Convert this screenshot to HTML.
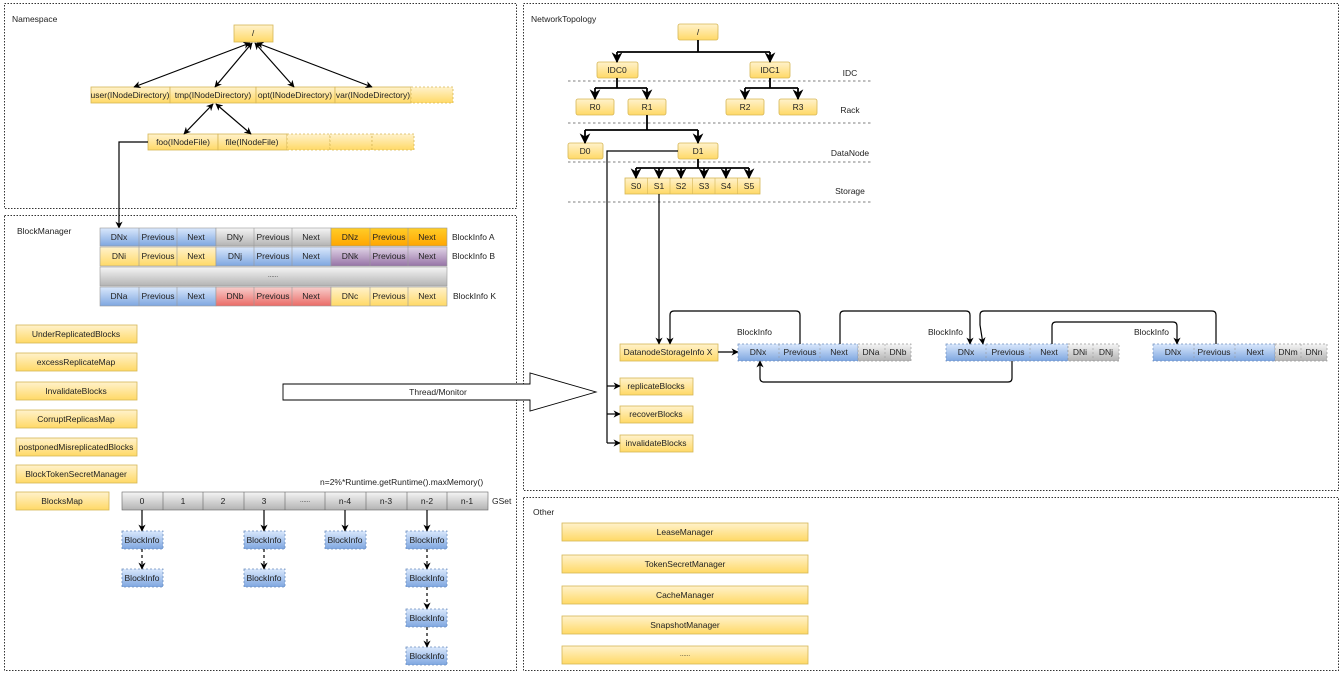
<!DOCTYPE html>
<html><head><meta charset="utf-8"><style>
html,body{margin:0;padding:0;background:#fff;width:1344px;height:673px;overflow:hidden}
svg{display:block;font-family:"Liberation Sans",sans-serif;font-size:8.5px}
text{fill:#222}
.c{text-anchor:middle;dominant-baseline:central}
.l{dominant-baseline:central}
.pan{fill:none;stroke:#333;stroke-dasharray:1.5 1.5;stroke-width:1}
.ln{fill:none;stroke:#000;stroke-width:1.2}
.lb{fill:none;stroke:#000;stroke-width:1.8}
.hd{stroke-dasharray:3 3}
</style></head><body>
<svg width="1344" height="673" viewBox="0 0 1344 673">
<defs>
<linearGradient id="y" x1="0" y1="0" x2="0" y2="1"><stop offset="0" stop-color="#fff2cc"/><stop offset="1" stop-color="#ffd966"/></linearGradient>
<linearGradient id="b" x1="0" y1="0" x2="0" y2="1"><stop offset="0" stop-color="#dae8fc"/><stop offset="1" stop-color="#7ea6e0"/></linearGradient>
<linearGradient id="g" x1="0" y1="0" x2="0" y2="1"><stop offset="0" stop-color="#f5f5f5"/><stop offset="1" stop-color="#b3b3b3"/></linearGradient>
<linearGradient id="o" x1="0" y1="0" x2="0" y2="1"><stop offset="0" stop-color="#ffcd28"/><stop offset="1" stop-color="#ffa500"/></linearGradient>
<linearGradient id="p" x1="0" y1="0" x2="0" y2="1"><stop offset="0" stop-color="#e1d5e7"/><stop offset="1" stop-color="#9673a6"/></linearGradient>
<linearGradient id="r" x1="0" y1="0" x2="0" y2="1"><stop offset="0" stop-color="#f8cecc"/><stop offset="1" stop-color="#ea6b66"/></linearGradient>
<marker id="a" viewBox="0 0 10 10" refX="9" refY="5" markerWidth="6" markerHeight="6" orient="auto-start-reverse"><path d="M0,0 L10,5 L0,10 L3,5 z" fill="#000"/></marker>
</defs>

<rect class="pan" x="4.5" y="3.5" width="512" height="205"/>
<rect class="pan" x="4.5" y="215.5" width="512" height="455"/>
<rect class="pan" x="523.5" y="3.5" width="815" height="487"/>
<rect class="pan" x="523.5" y="497.5" width="815" height="173"/>
<text x="12" y="19" class="l">Namespace</text>
<text x="17" y="231" class="l">BlockManager</text>
<text x="531" y="19" class="l">NetworkTopology</text>
<text x="533" y="512" class="l">Other</text>

<g stroke="#d6b656" stroke-width="0.8">
<rect x="234" y="25" width="39" height="17" fill="url(#y)"/>
<rect x="91" y="87" width="79" height="16" fill="url(#y)"/>
<rect x="170" y="87" width="86" height="16" fill="url(#y)"/>
<rect x="256" y="87" width="79" height="16" fill="url(#y)"/>
<rect x="335" y="87" width="76" height="16" fill="url(#y)"/>
<rect x="411" y="87" width="42" height="16" fill="url(#y)" stroke-dasharray="2 2"/>
<rect x="148" y="134" width="70" height="16" fill="url(#y)"/>
<rect x="218" y="134" width="69" height="16" fill="url(#y)"/>
<rect x="287" y="134" width="43" height="16" fill="url(#y)" stroke-dasharray="2 2"/>
<rect x="330" y="134" width="42" height="16" fill="url(#y)" stroke-dasharray="2 2"/>
<rect x="372" y="134" width="42" height="16" fill="url(#y)" stroke-dasharray="2 2"/>
</g>
<text x="253" y="33" class="c">/</text>
<text x="130" y="95" class="c">user(INodeDirectory)</text>
<text x="213" y="95" class="c">tmp(INodeDirectory)</text>
<text x="295" y="95" class="c">opt(INodeDirectory)</text>
<text x="373" y="95" class="c">var(INodeDirectory)</text>
<text x="183" y="142" class="c">foo(INodeFile)</text>
<text x="252" y="142" class="c">file(INodeFile)</text>
<g class="ln" marker-start="url(#a)" marker-end="url(#a)">
<line x1="250" y1="43" x2="134" y2="87"/>
<line x1="252" y1="43" x2="215" y2="87"/>
<line x1="255" y1="43" x2="294" y2="87"/>
<line x1="257" y1="43" x2="372" y2="87"/>
<line x1="213" y1="104" x2="184" y2="134"/>
<line x1="216" y1="104" x2="251" y2="134"/>
</g>
<path class="ln" d="M148,142 H119 V228" marker-end="url(#a)"/>

<g stroke="#999" stroke-width="0.6">
<rect x="100" y="228" width="116" height="18" fill="url(#b)"/>
<rect x="216" y="228" width="115" height="18" fill="url(#g)"/>
<rect x="331" y="228" width="116" height="18" fill="url(#o)"/>
<rect x="100" y="247" width="116" height="19" fill="url(#y)"/>
<rect x="216" y="247" width="115" height="19" fill="url(#b)"/>
<rect x="331" y="247" width="116" height="19" fill="url(#p)"/>
<rect x="100" y="267" width="347" height="19" fill="url(#g)"/>
<rect x="100" y="287" width="116" height="19" fill="url(#b)"/>
<rect x="216" y="287" width="115" height="19" fill="url(#r)"/>
<rect x="331" y="287" width="116" height="19" fill="url(#y)"/>
<path d="M139,228V266M177,228V266M254,228V266M292,228V266M370,228V266M408,228V266M139,287V306M177,287V306M254,287V306M292,287V306M370,287V306M408,287V306"/>
</g>
<text x="119" y="237" class="c">DNx</text><text x="158" y="237" class="c">Previous</text><text x="196" y="237" class="c">Next</text>
<text x="235" y="237" class="c">DNy</text><text x="273" y="237" class="c">Previous</text><text x="311" y="237" class="c">Next</text>
<text x="350" y="237" class="c">DNz</text><text x="389" y="237" class="c">Previous</text><text x="427" y="237" class="c">Next</text>
<text x="119" y="256" class="c">DNi</text><text x="158" y="256" class="c">Previous</text><text x="196" y="256" class="c">Next</text>
<text x="235" y="256" class="c">DNj</text><text x="273" y="256" class="c">Previous</text><text x="311" y="256" class="c">Next</text>
<text x="350" y="256" class="c">DNk</text><text x="389" y="256" class="c">Previous</text><text x="427" y="256" class="c">Next</text>
<text x="273" y="276" class="c" style="font-size:6px">......</text>
<text x="119" y="296" class="c">DNa</text><text x="158" y="296" class="c">Previous</text><text x="196" y="296" class="c">Next</text>
<text x="235" y="296" class="c">DNb</text><text x="273" y="296" class="c">Previous</text><text x="311" y="296" class="c">Next</text>
<text x="350" y="296" class="c">DNc</text><text x="389" y="296" class="c">Previous</text><text x="427" y="296" class="c">Next</text>
<text x="452" y="237" class="l">BlockInfo A</text>
<text x="452" y="256" class="l">BlockInfo B</text>
<text x="453" y="296" class="l">BlockInfo K</text>

<g stroke="#d6b656" stroke-width="0.8" fill="url(#y)">
<rect x="16" y="325" width="121" height="18"/>
<rect x="16" y="353" width="121" height="18"/>
<rect x="16" y="382" width="121" height="18"/>
<rect x="16" y="410" width="121" height="18"/>
<rect x="16" y="438" width="121" height="18"/>
<rect x="16" y="465" width="121" height="18"/>
<rect x="16" y="492" width="93" height="18"/>
</g>
<text x="76" y="334" class="c">UnderReplicatedBlocks</text>
<text x="76" y="362" class="c">excessReplicateMap</text>
<text x="76" y="391" class="c">InvalidateBlocks</text>
<text x="76" y="419" class="c">CorruptReplicasMap</text>
<text x="76" y="447" class="c">postponedMisreplicatedBlocks</text>
<text x="76" y="474" class="c">BlockTokenSecretManager</text>
<text x="62" y="501" class="c">BlocksMap</text>

<text x="320" y="482" class="l">n=2%*Runtime.getRuntime().maxMemory()</text>
<g stroke="#666" stroke-width="0.6" fill="url(#g)">
<rect x="122" y="492" width="366" height="18"/>
</g>
<path stroke="#666" stroke-width="0.6" d="M163,492V510M203,492V510M244,492V510M285,492V510M325,492V510M366,492V510M407,492V510M447,492V510"/>
<text x="142" y="501" class="c">0</text><text x="183" y="501" class="c">1</text><text x="223" y="501" class="c">2</text>
<text x="264" y="501" class="c">3</text><text x="305" y="501" class="c" style="font-size:6px">......</text><text x="345" y="501" class="c">n-4</text>
<text x="386" y="501" class="c">n-3</text><text x="427" y="501" class="c">n-2</text><text x="467" y="501" class="c">n-1</text>
<text x="492" y="501" class="l">GSet</text>
<g stroke="#6c8ebf" stroke-width="0.8" stroke-dasharray="2 2" fill="url(#b)">
<rect x="122" y="531" width="41" height="18"/><rect x="122" y="569" width="41" height="18"/>
<rect x="244" y="531" width="41" height="18"/><rect x="244" y="569" width="41" height="18"/>
<rect x="325" y="531" width="41" height="18"/>
<rect x="406" y="531" width="41" height="18"/><rect x="406" y="569" width="41" height="18"/>
<rect x="406" y="609" width="41" height="18"/><rect x="406" y="647" width="41" height="18"/>
</g>
<text x="142" y="540" class="c">BlockInfo</text><text x="142" y="578" class="c">BlockInfo</text>
<text x="264" y="540" class="c">BlockInfo</text><text x="264" y="578" class="c">BlockInfo</text>
<text x="345" y="540" class="c">BlockInfo</text>
<text x="427" y="540" class="c">BlockInfo</text><text x="427" y="578" class="c">BlockInfo</text>
<text x="427" y="618" class="c">BlockInfo</text><text x="427" y="656" class="c">BlockInfo</text>
<g class="ln" marker-end="url(#a)">
<line x1="142" y1="510" x2="142" y2="531"/><line x1="264" y1="510" x2="264" y2="531"/>
<line x1="345" y1="510" x2="345" y2="531"/><line x1="427" y1="510" x2="427" y2="531"/>
</g>
<g class="ln hd" marker-end="url(#a)">
<line x1="142" y1="549" x2="142" y2="569"/><line x1="264" y1="549" x2="264" y2="569"/>
<line x1="427" y1="549" x2="427" y2="569"/><line x1="427" y1="587" x2="427" y2="609"/>
<line x1="427" y1="627" x2="427" y2="647"/>
</g>

<path d="M283,384 H530 V373 L596,392 L530,411 V400 H283 Z" fill="#fff" stroke="#000" stroke-width="0.9"/>
<text x="438" y="392" class="c">Thread/Monitor</text>

<g stroke="#555" stroke-dasharray="2.5 2.5" stroke-width="0.8">
<line x1="568" y1="81" x2="872" y2="81"/><line x1="568" y1="123" x2="872" y2="123"/>
<line x1="568" y1="162" x2="872" y2="162"/><line x1="568" y1="202" x2="872" y2="202"/>
</g>
<text x="850" y="73" class="c">IDC</text><text x="850" y="110" class="c">Rack</text>
<text x="850" y="153" class="c">DataNode</text><text x="850" y="191" class="c">Storage</text>
<g stroke="#d6b656" stroke-width="0.8" fill="url(#y)">
<rect x="678" y="24" width="40" height="16" rx="2"/>
<rect x="597" y="62" width="41" height="16" rx="2"/><rect x="750" y="62" width="40" height="16" rx="2"/>
<rect x="576" y="99" width="38" height="16" rx="2"/><rect x="628" y="99" width="38" height="16" rx="2"/>
<rect x="726" y="99" width="38" height="16" rx="2"/><rect x="779" y="99" width="38" height="16" rx="2"/>
<rect x="568" y="143" width="35" height="16" rx="2"/><rect x="678" y="143" width="40" height="16" rx="2"/>
<rect x="625" y="178" width="135" height="16"/>
<rect x="620" y="344" width="98" height="17"/>
<rect x="620" y="378" width="73" height="17"/><rect x="620" y="406" width="73" height="17"/><rect x="620" y="435" width="73" height="17"/>
</g>
<path stroke="#d6b656" stroke-width="0.6" d="M647.5,178V194M670,178V194M692.5,178V194M715,178V194M737.5,178V194"/>
<text x="698" y="32" class="c">/</text>
<text x="617" y="70" class="c">IDC0</text><text x="770" y="70" class="c">IDC1</text>
<text x="595" y="107" class="c">R0</text><text x="647" y="107" class="c">R1</text>
<text x="745" y="107" class="c">R2</text><text x="798" y="107" class="c">R3</text>
<text x="585" y="151" class="c">D0</text><text x="698" y="151" class="c">D1</text>
<text x="636" y="186" class="c">S0</text><text x="659" y="186" class="c">S1</text><text x="681" y="186" class="c">S2</text>
<text x="704" y="186" class="c">S3</text><text x="726" y="186" class="c">S4</text><text x="749" y="186" class="c">S5</text>
<text x="668" y="352" class="c">DatanodeStorageInfo X</text>
<text x="656" y="386" class="c">replicateBlocks</text>
<text x="656" y="414" class="c">recoverBlocks</text>
<text x="656" y="443" class="c">invalidateBlocks</text>
<g class="lb">
<path d="M698,40V52M617,52H770"/><path d="M617,78V88M595,88H647"/><path d="M770,78V88M745,88H798"/>
<path d="M647,115V130M585,130H698"/><path d="M698,159V168M636,168H749"/>
</g>
<g class="lb" marker-end="url(#a)">
<line x1="617" y1="52" x2="617" y2="62"/><line x1="770" y1="52" x2="770" y2="62"/>
<line x1="595" y1="88" x2="595" y2="99"/><line x1="647" y1="88" x2="647" y2="99"/>
<line x1="745" y1="88" x2="745" y2="99"/><line x1="798" y1="88" x2="798" y2="99"/>
<line x1="585" y1="130" x2="585" y2="143"/><line x1="698" y1="130" x2="698" y2="143"/>
<line x1="636" y1="168" x2="636" y2="178"/><line x1="659" y1="168" x2="659" y2="178"/>
<line x1="681" y1="168" x2="681" y2="178"/><line x1="704" y1="168" x2="704" y2="178"/>
<line x1="726" y1="168" x2="726" y2="178"/><line x1="749" y1="168" x2="749" y2="178"/>
</g>
<path class="ln" d="M678,151H607V443"/>
<g class="ln" marker-end="url(#a)">
<line x1="607" y1="386" x2="620" y2="386"/><line x1="607" y1="414" x2="620" y2="414"/>
<line x1="607" y1="443" x2="620" y2="443"/>
<line x1="659" y1="194" x2="659" y2="344"/>
<line x1="718" y1="352" x2="738" y2="352"/>
</g>

<g stroke="#6c8ebf" stroke-width="0.7" stroke-dasharray="2 2">
<rect x="738" y="344" width="120" height="17" fill="url(#b)"/>
<rect x="946" y="344" width="122" height="17" fill="url(#b)"/>
<rect x="1153" y="344" width="122" height="17" fill="url(#b)"/>
</g>
<g stroke="#999" stroke-width="0.7" stroke-dasharray="2 2" fill="url(#g)">
<rect x="858" y="344" width="53" height="17"/><rect x="1068" y="344" width="51" height="17"/><rect x="1275" y="344" width="52" height="17"/>
</g>
<path stroke="#999" stroke-width="0.6" stroke-dasharray="2 2" d="M779,344V361M820,344V361M885,344V361M986,344V361M1030,344V361M1093,344V361M1194,344V361M1235,344V361M1301,344V361"/>
<text x="758" y="352" class="c">DNx</text><text x="800" y="352" class="c">Previous</text><text x="839" y="352" class="c">Next</text>
<text x="871" y="352" class="c">DNa</text><text x="898" y="352" class="c">DNb</text>
<text x="966" y="352" class="c">DNx</text><text x="1008" y="352" class="c">Previous</text><text x="1049" y="352" class="c">Next</text>
<text x="1080" y="352" class="c">DNi</text><text x="1106" y="352" class="c">DNj</text>
<text x="1173" y="352" class="c">DNx</text><text x="1214" y="352" class="c">Previous</text><text x="1255" y="352" class="c">Next</text>
<text x="1288" y="352" class="c">DNm</text><text x="1314" y="352" class="c">DNn</text>
<text x="737" y="332" class="l">BlockInfo</text><text x="928" y="332" class="l">BlockInfo</text><text x="1134" y="332" class="l">BlockInfo</text>
<g class="ln" marker-end="url(#a)">
<path d="M800,344V315Q800,311 796,311H674Q670,311 670,315V344"/>
<path d="M840,344V315Q840,311 844,311H966Q970,311 970,315V344"/>
<path d="M1216,344V315Q1216,311 1212,311H984Q980,311 980,315V325L983,344"/>
<path d="M1052,344V326Q1052,322 1056,322H1173Q1177,322 1177,326V344"/>
<path d="M1012,361V378Q1012,382 1008,382H764Q760,382 760,378V361"/>
</g>

<g stroke="#d6b656" stroke-width="0.8" fill="url(#y)">
<rect x="562" y="523" width="246" height="18"/><rect x="562" y="555" width="246" height="18"/>
<rect x="562" y="586" width="246" height="18"/><rect x="562" y="616" width="246" height="18"/>
<rect x="562" y="646" width="246" height="18"/>
</g>
<text x="685" y="532" class="c">LeaseManager</text>
<text x="685" y="564" class="c">TokenSecretManager</text>
<text x="685" y="595" class="c">CacheManager</text>
<text x="685" y="625" class="c">SnapshotManager</text>
<text x="685" y="655" class="c" style="font-size:6px">......</text>
</svg>
</body></html>
